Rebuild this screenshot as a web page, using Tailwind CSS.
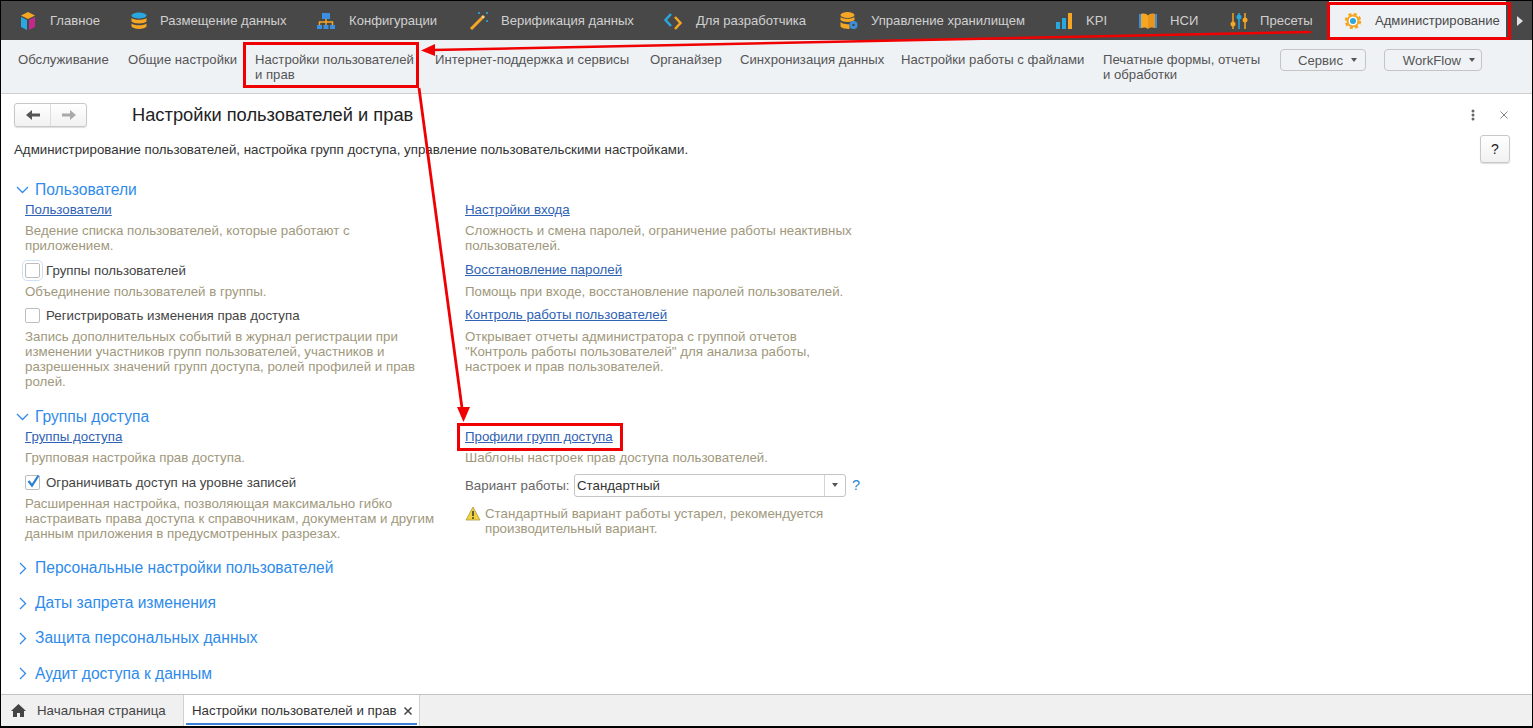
<!DOCTYPE html>
<html lang="ru">
<head>
    <meta charset="UTF-8">
    <title>Настройки пользователей и прав</title>
    <script src="https://cdn.jsdelivr.net/npm/@tailwindcss/browser@4"></script>
</head>
<body class="font-['Liberation_Sans',Arial,sans-serif] text-[13.3px] leading-[15px] text-[#4a4a4a] bg-white overflow-hidden">
<div class="relative w-[1533px] h-[728px] flex flex-col border-l border-r border-t border-b-2 border-black overflow-hidden">

    <!-- top section bar -->
    <nav class="h-[39px] shrink-0 flex items-center pl-[17px] bg-[#484848] text-[#d0d0d0] text-[13.1px]">
        <a class="flex items-center w-[111px] gap-[12px]">
            <svg class="w-[20px] h-[20px]" viewBox="0 0 20 20"><path d="M10 1l7 3.500-7 3.500-7-3.500z" fill="#f5a623"/><path d="M3 6l6 3v10l-6-3z" fill="#29a8e0"/><path d="M17 6l-6 3v10l6-3z" fill="#c2298a"/></svg>
            <span>Главное</span>
        </a>
        <a class="flex items-center w-[187px] gap-[11px]">
            <svg class="w-[20px] h-[20px]" viewBox="0 0 20 20"><ellipse cx="10" cy="4.500" rx="7.500" ry="3" fill="#29a8e0"/><path d="M2.500 7c2 2.400 13 2.400 15 0v3.500c-2 2.600-13 2.600-15 0z" fill="#f5a623"/><path d="M2.500 12.500c2 2.400 13 2.400 15 0v3c-2 3.200-13 3.200-15 0z" fill="#f5a623"/></svg>
            <span>Размещение данных</span>
        </a>
        <a class="flex items-center w-[153px] gap-[13px]">
            <svg class="w-[20px] h-[20px]" viewBox="0 0 20 20"><rect x="6" y="2" width="8" height="6" fill="#3b8fe0"/><path d="M10 8v3M3.500 14v-3h13v3M10 11v3" stroke="#f5a623" stroke-width="1.500" fill="none"/><rect x="1" y="14" width="5" height="4" fill="#3b8fe0"/><rect x="7.500" y="14" width="5" height="4" fill="#3b8fe0"/><rect x="14" y="14" width="5" height="4" fill="#3b8fe0"/></svg>
            <span>Конфигурации</span>
        </a>
        <a class="flex items-center w-[194px] gap-[12px]">
            <svg class="w-[20px] h-[20px]" viewBox="0 0 20 20"><path d="M2 18L13 7" stroke="#f5a623" stroke-width="3"/><path d="M13 7l2-2" stroke="#ffd27a" stroke-width="3"/><path d="M9 2h2M10 1v2M17 2h2M18 1v2M17 10h2M18 9v2" stroke="#29a8e0" stroke-width="1.200"/></svg>
            <span>Верификация данных</span>
        </a>
        <a class="flex items-center w-[176px] gap-[13px]">
            <svg class="w-[20px] h-[20px]" viewBox="0 0 20 20"><path d="M8 3L2.500 9l5.500 6" stroke="#29a8e0" stroke-width="2.500" fill="none"/><path d="M12 6l5.500 6-5.500 6" stroke="#f5a623" stroke-width="2.500" fill="none"/></svg>
            <span>Для разработчика</span>
        </a>
        <a class="flex items-center w-[215px] gap-[12px]">
            <svg class="w-[20px] h-[20px]" viewBox="0 0 20 20"><ellipse cx="8.500" cy="4" rx="7" ry="3" fill="#f5a623"/><path d="M1.500 6c2 2.400 12 2.400 14 0v3c-2 2.600-12 2.600-14 0z" fill="#f5a623"/><path d="M1.500 11c2 2.400 9 2.400 9 2.400V18c-4 0-8-.8-9-2.500z" fill="#f5a623"/><circle cx="14.500" cy="14" r="4" fill="#3b8fe0"/><circle cx="14.500" cy="14" r="1.300" fill="#484848"/></svg>
            <span>Управление хранилищем</span>
        </a>
        <a class="flex items-center w-[84px] gap-[12px]">
            <svg class="w-[20px] h-[20px]" viewBox="0 0 20 20"><rect x="2" y="11" width="4" height="7" fill="#29a8e0"/><rect x="8" y="7" width="4" height="11" fill="#29a8e0"/><rect x="14" y="2" width="4" height="16" fill="#f5a623"/></svg>
            <span>KPI</span>
        </a>
        <a class="flex items-center w-[91px] gap-[12px]">
            <svg class="w-[20px] h-[20px]" viewBox="0 0 20 20"><path d="M1 3h2v14H1z" fill="#3b8fe0"/><path d="M17 3h2v14h-2z" fill="#3b8fe0"/><path d="M3 3c3-1 6 0 7 1.500V18c-1-1.500-4-2-7-1z" fill="#f5a623"/><path d="M17 3c-3-1-6 0-7 1.500V18c1-1.500 4-2 7-1z" fill="#e8951a"/></svg>
            <span>НСИ</span>
        </a>
        <a class="flex items-center w-[115px] gap-[11px]">
            <svg class="w-[20px] h-[20px]" viewBox="0 0 20 20"><path d="M4 2v16" stroke="#f5a623" stroke-width="1.500"/><path d="M10 2v16" stroke="#29a8e0" stroke-width="1.500"/><path d="M16 2v16" stroke="#f5a623" stroke-width="1.500"/><circle cx="4" cy="13" r="2.500" fill="#f5a623"/><circle cx="10" cy="6" r="2.500" fill="#29a8e0"/><circle cx="16" cy="9" r="2.500" fill="#f5a623"/></svg>
            <span>Пресеты</span>
        </a>
        <a class="flex items-center self-stretch w-[177px] shrink-0 ml-[-15px] pl-[14px] gap-[12px] bg-[#eff2f5] text-[#4a4a4a]">
            <svg class="w-[20px] h-[20px]" viewBox="0 0 20 20"><circle cx="10" cy="10" r="6.500" fill="none" stroke="#f5a623" stroke-width="3.500" stroke-dasharray="2.800 2.300"/><circle cx="10" cy="10" r="5.500" fill="none" stroke="#f5a623" stroke-width="2"/><circle cx="10" cy="10" r="4" fill="#fff"/><circle cx="10" cy="10" r="3" fill="#29a8e0"/></svg>
            <span>Администрирование</span>
        </a>
        <svg class="w-[8px] h-[10px] ml-[10px] shrink-0" viewBox="0 0 8 10"><path d="M1 0l6 5-6 5z" fill="#e0e0e0"/></svg>
    </nav>

    <!-- subsections -->
    <div class="h-[54px] shrink-0 flex items-start pt-[12px] pl-[17px] bg-[#eff2f5] border-b border-[#cfcfcf] text-[#555] text-[13.15px]">
        <a class="w-[110px]">Обслуживание</a>
        <a class="w-[127px]">Общие настройки</a>
        <a class="w-[180px]">Настройки пользователей<br>и прав</a>
        <a class="w-[215px]">Интернет-поддержка и сервисы</a>
        <a class="w-[90px]">Органайзер</a>
        <a class="w-[161px]">Синхронизация данных</a>
        <a class="w-[202px]">Настройки работы с файлами</a>
        <a class="w-[177px]">Печатные формы, отчеты<br>и обработки</a>
        <button class="w-[86px] h-[22px] mt-[-3px] mr-[18px] flex items-center justify-end gap-[8px] pr-[8px] bg-[#f0f3f6] border border-[#c4c4c4] rounded-[4px]">
            <span>Сервис</span>
            <svg class="w-[6px] h-[4px]" viewBox="0 0 6 4"><path d="M0 0h6L3 4z" fill="#555"/></svg>
        </button>
        <button class="w-[98px] h-[22px] mt-[-3px] flex items-center justify-end gap-[8px] pr-[6px] bg-[#f0f3f6] border border-[#c4c4c4] rounded-[4px]">
            <span>WorkFlow</span>
            <svg class="w-[6px] h-[4px]" viewBox="0 0 6 4"><path d="M0 0h6L3 4z" fill="#555"/></svg>
        </button>
    </div>

    <!-- form -->
    <main class="flex-1 min-h-0 px-[13px] pt-[8px]">
        <div class="flex items-center h-[26px]">
            <div class="flex w-[73px] h-[24px] bg-gradient-to-b from-white to-[#f1f1f1] border border-[#c8c8c8] rounded-[3px] shadow-[0_1px_1px_#ddd]">
                <span class="flex-1 flex items-center justify-center border-r border-[#ddd]">
                    <svg class="w-[14px] h-[10px]" viewBox="0 0 14 10"><path d="M0 5l6-5v3.500h8v3H6V10z" fill="#555"/></svg>
                </span>
                <span class="flex-1 flex items-center justify-center">
                    <svg class="w-[14px] h-[10px]" viewBox="0 0 14 10"><path d="M14 5L8 0v3.500H0v3h8V10z" fill="#aaa"/></svg>
                </span>
            </div>
            <h1 class="ml-[45px] text-[18.3px] leading-[24px] text-[#222]">Настройки пользователей и прав</h1>
            <svg class="ml-auto w-[4px] h-[12px] mr-[25px]" viewBox="0 0 4 12"><circle cx="2" cy="2" r="1.500" fill="#666"/><circle cx="2" cy="6" r="1.500" fill="#666"/><circle cx="2" cy="10" r="1.500" fill="#666"/></svg>
            <svg class="w-[8px] h-[8px] mr-[11px]" viewBox="0 0 8 8"><path d="M0.500 0.500l7 7M7.500 0.500l-7 7" stroke="#888" stroke-width="1"/></svg>
        </div>
        <div class="flex items-start mt-[7px] h-[31px]">
            <p class="mt-[7px] text-[#333]">Администрирование пользователей, настройка групп доступа, управление пользовательскими настройками.</p>
            <button class="ml-auto mr-[9px] w-[30px] h-[28px] text-[14px] text-[#222] bg-gradient-to-b from-white to-[#f1f1f1] border border-[#c8c8c8] rounded-[3px] shadow-[0_1px_1px_#ddd]">?</button>
        </div>

        <!-- Пользователи -->
        <h2 class="flex items-center h-[20px] mt-[14px] gap-[6px] text-[15.6px] leading-[20px] text-[#2f8bea]">
            <svg class="w-[13px] h-[8px] ml-[2px]" viewBox="0 0 13 8"><path d="M1 1l5.500 5.500L12 1" fill="none" stroke="#2f8bea" stroke-width="1.300"/></svg>
            Пользователи
        </h2>
        <div class="grid grid-cols-[440px_440px] pl-[11px] mt-[2px]">
            <div>
                <a class="block h-[19px] text-[#2e62b5] underline">Пользователи</a>
                <p class="mt-[2px] text-[#a0987c]">Ведение списка пользователей, которые работают с<br>приложением.</p>
                <label class="flex items-center h-[16px] mt-[9px] gap-[6px] text-[#444]">
                    <span class="w-[15px] h-[15px] bg-white border border-[#bdbdbd] rounded-[2px] outline-1 outline-offset-2 outline-[#cfe0f5]"></span>Группы пользователей
                </label>
                <p class="mt-[6px] text-[#a0987c]">Объединение пользователей в группы.</p>
                <label class="flex items-center h-[16px] mt-[8px] gap-[6px] text-[#444]">
                    <span class="w-[15px] h-[15px] bg-white border border-[#bdbdbd] rounded-[2px]"></span>Регистрировать изменения прав доступа
                </label>
                <p class="mt-[6px] text-[#a0987c]">Запись дополнительных событий в журнал регистрации при<br>изменении участников групп пользователей, участников и<br>разрешенных значений групп доступа, ролей профилей и прав<br>ролей.</p>
            </div>
            <div>
                <a class="block h-[19px] text-[#2e62b5] underline">Настройки входа</a>
                <p class="mt-[2px] text-[#a0987c]">Сложность и смена паролей, ограничение работы неактивных<br>пользователей.</p>
                <a class="block h-[16px] mt-[9px] text-[#2e62b5] underline">Восстановление паролей</a>
                <p class="mt-[6px] text-[#a0987c]">Помощь при входе, восстановление паролей пользователей.</p>
                <a class="block h-[16px] mt-[8px] text-[#2e62b5] underline">Контроль работы пользователей</a>
                <p class="mt-[6px] text-[#a0987c]">Открывает отчеты администратора с группой отчетов<br>"Контроль работы пользователей" для анализа работы,<br>настроек и прав пользователей.</p>
            </div>
        </div>

        <!-- Группы доступа -->
        <h2 class="flex items-center h-[20px] mt-[18px] gap-[6px] text-[15.6px] leading-[20px] text-[#2f8bea]">
            <svg class="w-[13px] h-[8px] ml-[2px]" viewBox="0 0 13 8"><path d="M1 1l5.500 5.500L12 1" fill="none" stroke="#2f8bea" stroke-width="1.300"/></svg>
            Группы доступа
        </h2>
        <div class="grid grid-cols-[440px_440px] pl-[11px] mt-[2px]">
            <div>
                <a class="block h-[19px] text-[#2e62b5] underline">Группы доступа</a>
                <p class="mt-[2px] text-[#a0987c]">Групповая настройка прав доступа.</p>
                <label class="flex items-center h-[16px] mt-[9px] gap-[6px] text-[#444]">
                    <span class="relative w-[15px] h-[15px] bg-white border border-[#bdbdbd] rounded-[2px]">
                        <svg class="absolute left-[1px] top-[-2px] w-[13px] h-[14px]" viewBox="0 0 13 14"><path d="M1.500 7l3.500 4.500L11.500 1.500" fill="none" stroke="#2a7fd4" stroke-width="2.200"/></svg>
                    </span>Ограничивать доступ на уровне записей
                </label>
                <p class="mt-[6px] text-[#a0987c]">Расширенная настройка, позволяющая максимально гибко<br>настраивать права доступа к справочникам, документам и другим<br>данным приложения в предусмотренных разрезах.</p>
            </div>
            <div>
                <a class="block h-[19px] text-[#2e62b5] underline">Профили групп доступа</a>
                <p class="mt-[2px] text-[#a0987c]">Шаблоны настроек прав доступа пользователей.</p>
                <div class="flex items-center h-[24px] mt-[8px]">
                    <span class="w-[109px] text-[#666]">Вариант работы:</span>
                    <div class="flex items-center w-[272px] h-[23px] bg-white border border-[#c4c4c4] rounded-[3px] text-[#333]">
                        <span class="flex-1 pl-[2px]">Стандартный</span>
                        <span class="flex items-center justify-center w-[21px] h-full border-l border-[#d4d4d4]">
                            <svg class="w-[6px] h-[4px]" viewBox="0 0 6 4"><path d="M0 0h6L3 4z" fill="#555"/></svg>
                        </span>
                    </div>
                    <span class="ml-[6px] text-[14.5px] text-[#2f8bcf]">?</span>
                </div>
                <div class="flex items-start mt-[9px] gap-[4px]">
                    <svg class="w-[16px] h-[15px] shrink-0" viewBox="0 0 16 15"><path d="M8 1l7 13H1z" fill="#f2d23c" stroke="#a89a4a" stroke-width="0.800"/><path d="M8 5v5" stroke="#333" stroke-width="1.500"/><circle cx="8" cy="12" r="0.900" fill="#333"/></svg>
                    <p class="text-[#a0987c]">Стандартный вариант работы устарел, рекомендуется<br>производительный вариант.</p>
                </div>
            </div>
        </div>

        <!-- свернутые группы -->
        <div class="flex flex-col mt-[17px] gap-[15.200px] text-[15.6px] leading-[20px] text-[#2f8bea]">
            <h2 class="flex items-center h-[20px] gap-[8px]">
                <svg class="w-[8px] h-[13px] ml-[5px]" viewBox="0 0 8 13"><path d="M1 1l5.500 5.500L1 12" fill="none" stroke="#2f8bea" stroke-width="1.300"/></svg>
                Персональные настройки пользователей
            </h2>
            <h2 class="flex items-center h-[20px] gap-[8px]">
                <svg class="w-[8px] h-[13px] ml-[5px]" viewBox="0 0 8 13"><path d="M1 1l5.500 5.500L1 12" fill="none" stroke="#2f8bea" stroke-width="1.300"/></svg>
                Даты запрета изменения
            </h2>
            <h2 class="flex items-center h-[20px] gap-[8px]">
                <svg class="w-[8px] h-[13px] ml-[5px]" viewBox="0 0 8 13"><path d="M1 1l5.500 5.500L1 12" fill="none" stroke="#2f8bea" stroke-width="1.300"/></svg>
                Защита персональных данных
            </h2>
            <h2 class="flex items-center h-[20px] gap-[8px]">
                <svg class="w-[8px] h-[13px] ml-[5px]" viewBox="0 0 8 13"><path d="M1 1l5.500 5.500L1 12" fill="none" stroke="#2f8bea" stroke-width="1.300"/></svg>
                Аудит доступа к данным
            </h2>
        </div>
    </main>

    <!-- bottom tabs -->
    <footer class="h-[32px] shrink-0 flex bg-[#f0f0f0] border-t border-[#c4c4c4]">
        <a class="flex items-center w-[182px] pl-[10px] gap-[11px] text-[#444]">
            <svg class="w-[15px] h-[13px]" viewBox="0 0 15 13"><path d="M7.500 0L0 7h2v6h4V9h3v4h4V7h2z" fill="#444"/></svg>
            Начальная страница
        </a>
        <a class="relative flex items-center w-[237px] pl-[8px] gap-[7px] bg-white border-x border-[#d0d0d0] text-[#333]">
            Настройки пользователей и прав
            <svg class="w-[8px] h-[8px]" viewBox="0 0 8 8"><path d="M0.500 0.500l7 7M7.500 0.500l-7 7" stroke="#444" stroke-width="1.500"/></svg>
            <span class="absolute left-[2px] right-[2px] bottom-[1px] h-[2px] bg-[#3b82d8]"></span>
        </a>
    </footer>

    <!-- red callouts over the screenshot -->
    <div class="absolute left-[1326px] top-[1px] w-[184px] h-[38px] border-[3px] border-[#f00000]"></div>
    <div class="absolute left-[242px] top-[41px] w-[176px] h-[46px] border-[3px] border-[#f00000]"></div>
    <div class="absolute left-[456px] top-[422px] w-[166px] h-[28px] border-[3px] border-[#f00000]"></div>
    <svg class="absolute left-[-1px] top-[-1px] pointer-events-none" width="1533" height="728" viewBox="0 0 1533 728">
        <path d="M1311 32L432 50" stroke="#f00000" stroke-width="2.500" fill="none"/>
        <path d="M421 50.500l14-6.500v12z" fill="#f00000"/>
        <path d="M419 88L462 408" stroke="#f00000" stroke-width="2.800" fill="none"/>
        <path d="M463.500 422l-6.500-15h13z" fill="#f00000"/>
    </svg>
</div>
</body>
</html>
